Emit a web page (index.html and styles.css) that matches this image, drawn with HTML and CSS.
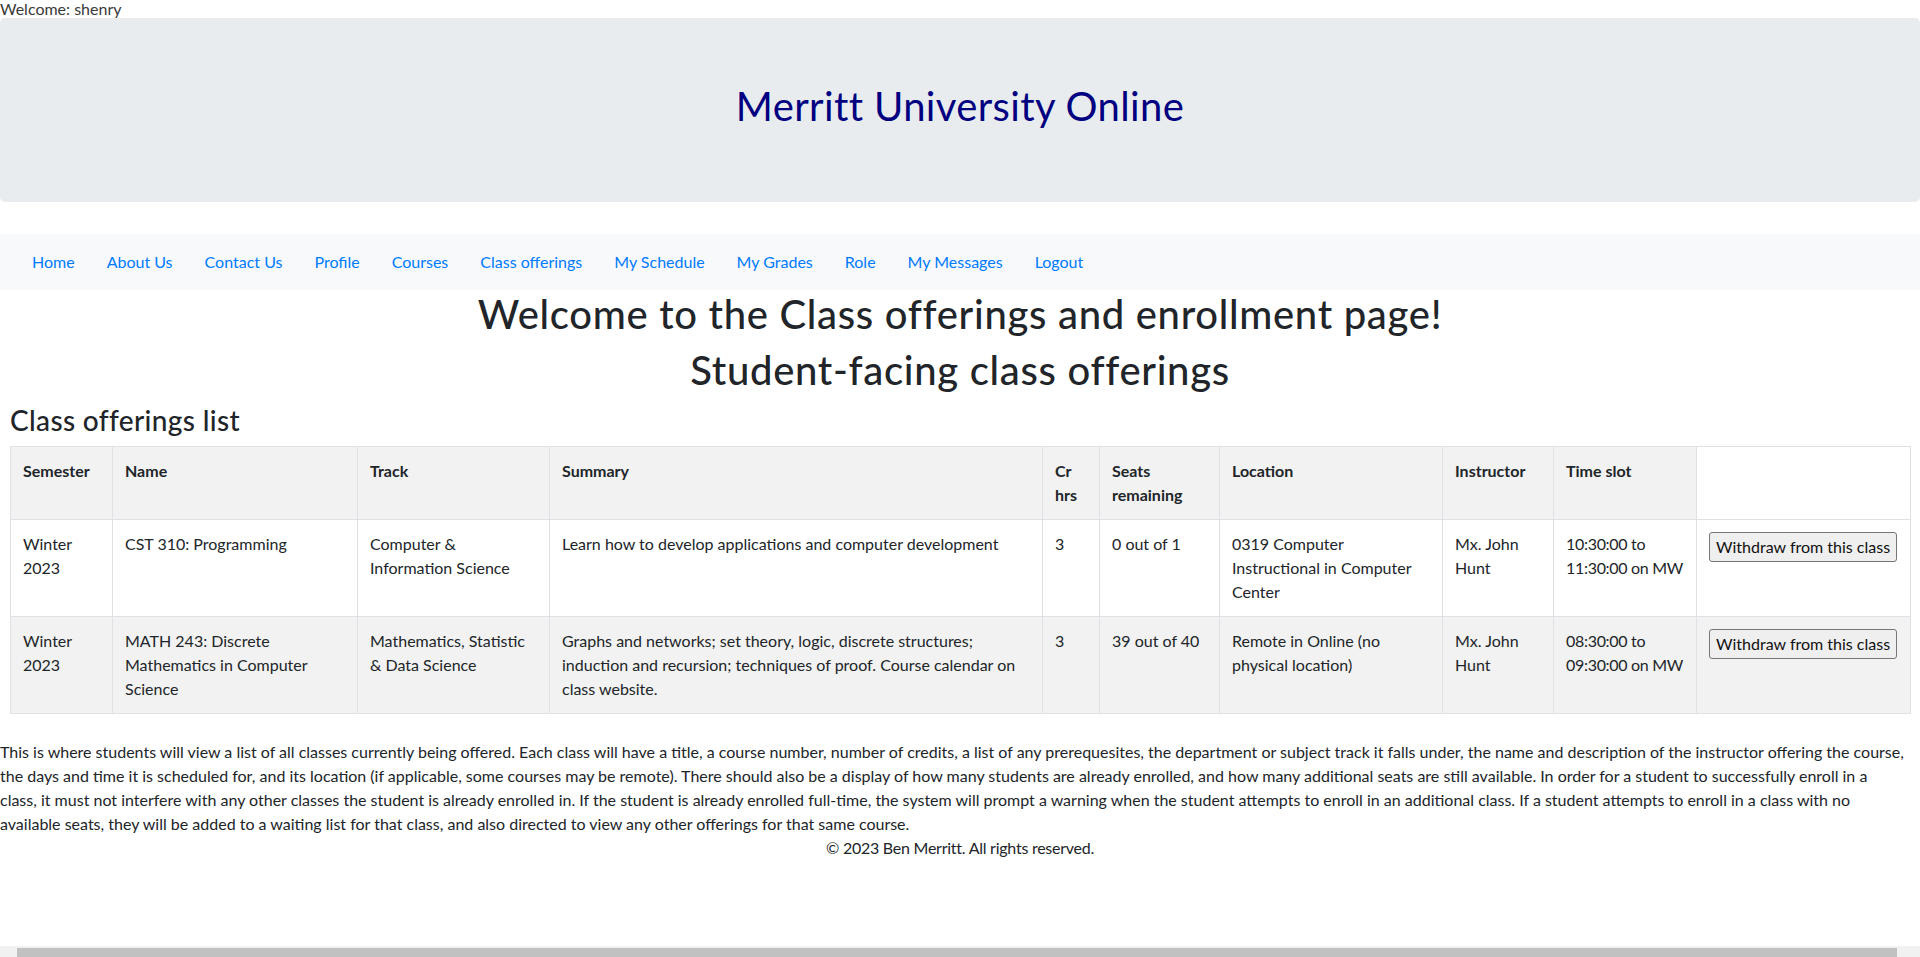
FILE: index.html
```html
<!DOCTYPE html>
<html lang="en">
<head>
<meta charset="utf-8">
<title>Class offerings - Merritt University Online</title>
<link rel="stylesheet" href="styles.css">
</head>
<body>
<div class="welcome">Welcome: shenry</div>
<header class="jumbotron">
  <h1 class="site-title">Merritt University Online</h1>
</header>
<nav class="navbar">
  <ul class="nav-list">
    <li><a class="nav-link" href="#">Home</a></li>
    <li><a class="nav-link" href="#">About Us</a></li>
    <li><a class="nav-link" href="#">Contact Us</a></li>
    <li><a class="nav-link" href="#">Profile</a></li>
    <li><a class="nav-link" href="#">Courses</a></li>
    <li><a class="nav-link" href="#">Class offerings</a></li>
    <li><a class="nav-link" href="#">My Schedule</a></li>
    <li><a class="nav-link" href="#">My Grades</a></li>
    <li><a class="nav-link" href="#">Role</a></li>
    <li><a class="nav-link" href="#">My Messages</a></li>
    <li><a class="nav-link" href="#">Logout</a></li>
  </ul>
</nav>
<main>
  <h1 class="page-title">Welcome to the Class offerings and enrollment page!</h1>
  <h1 class="page-title">Student-facing class offerings</h1>
  <section class="offerings">
    <h3 class="list-title">Class offerings list</h3>
    <table class="offer-table">
      <colgroup>
        <col class="c-sem"><col class="c-name"><col class="c-track"><col class="c-sum"><col class="c-cr">
        <col class="c-seats"><col class="c-loc"><col class="c-inst"><col class="c-time"><col class="c-act">
      </colgroup>
      <tbody>
        <tr class="head-row">
          <th>Semester</th><th>Name</th><th>Track</th><th>Summary</th><th>Cr hrs</th>
          <th>Seats remaining</th><th>Location</th><th>Instructor</th><th>Time slot</th>
        </tr>
        <tr>
          <td>Winter 2023</td>
          <td>CST 310: Programming</td>
          <td>Computer &amp; Information Science</td>
          <td>Learn how to develop applications and computer development</td>
          <td>3</td>
          <td>0 out of 1</td>
          <td>0319 Computer Instructional in Computer Center</td>
          <td>Mx. John Hunt</td>
          <td class="time">10:30:00 to 11:30:00 on MW</td>
          <td><button class="btn-withdraw" type="button">Withdraw from this class</button></td>
        </tr>
        <tr class="striped">
          <td>Winter 2023</td>
          <td>MATH 243: Discrete Mathematics in Computer Science</td>
          <td>Mathematics, Statistic &amp; Data Science</td>
          <td>Graphs and networks; set theory, logic, discrete structures; induction and recursion; techniques of proof. Course calendar on class website.</td>
          <td>3</td>
          <td>39 out of 40</td>
          <td>Remote in Online (no physical location)</td>
          <td>Mx. John Hunt</td>
          <td class="time">08:30:00 to 09:30:00 on MW</td>
          <td><button class="btn-withdraw" type="button">Withdraw from this class</button></td>
        </tr>
      </tbody>
    </table>
  </section>
  <p class="description">This is where students will view a list of all classes currently being offered. Each class will have a title, a course number, number of credits, a list of any prerequesites, the department or subject track it falls under, the name and description of the instructor offering the course,<br>the days and time it is scheduled for, and its location (if applicable, some courses may be remote). There should also be a display of how many students are already enrolled, and how many additional seats are still available. In order for a student to successfully enroll in a<br>class, it must not interfere with any other classes the student is already enrolled in. If the student is already enrolled full-time, the system will prompt a warning when the student attempts to enroll in an additional class. If a student attempts to enroll in a class with no<br>available seats, they will be added to a waiting list for that class, and also directed to view any other offerings for that same course.</p>
</main>
<footer class="footer">&copy; 2023 Ben Merritt. All rights reserved.</footer>
<div class="h-scrollbar" aria-hidden="true"><div class="h-scrollbar-thumb"></div></div>
</body>
</html>
```
FILE: styles.css
```css
html, body {
  margin: 0;
  padding: 0;
}

body {
  font-family: "Lato", "Liberation Sans", sans-serif;
  font-size: 16px;
  line-height: 1.5;
  color: #212529;
  background: #fff;
}

.welcome {
  line-height: 18px;
  color: #3a3a3a;
}

.jumbotron {
  background: #e9ecef;
  border-radius: 5px;
  padding: 64px 32px;
  margin-bottom: 32px;
}

.site-title {
  margin: 0 0 8px;
  text-align: center;
  font-size: 40px;
  font-weight: 400;
  line-height: 1.2;
  letter-spacing: 0.37px;
  color: #000080;
}

.navbar {
  background: #f8f9fa;
  padding: 8px 16px;
}

.nav-list {
  display: flex;
  list-style: none;
  margin: 0;
  padding: 0;
}

.nav-link {
  display: block;
  padding: 8px 16px;
  color: #007bff;
  text-decoration: none;
}

.page-title {
  margin: 0 0 8px;
  text-align: center;
  font-size: 40px;
  font-weight: 500;
  line-height: 1.2;
  letter-spacing: 0.7px;
}

.offerings {
  margin: 10px 10px 26px;
}

.list-title {
  margin: 0 0 8px;
  font-size: 28px;
  font-weight: 500;
  line-height: 1.2;
  letter-spacing: 0.35px;
}

.offer-table {
  width: 100%;
  table-layout: fixed;
  border-collapse: collapse;
  border: 1px solid #dee2e6;
  margin: 0;
}

.c-sem { width: 102px; }
.c-name { width: 245px; }
.c-track { width: 192px; }
.c-sum { width: 493px; }
.c-cr { width: 57px; }
.c-seats { width: 120px; }
.c-loc { width: 223px; }
.c-inst { width: 111px; }
.c-time { width: 143px; }
.c-act { width: 214px; }

.offer-table th,
.offer-table td {
  padding: 12px;
  border: 1px solid #dee2e6;
  vertical-align: top;
  text-align: left;
}

.offer-table th {
  font-weight: 700;
  background: #f2f2f2;
}

.offer-table .time {
  letter-spacing: -0.3px;
}

.striped td {
  background: #f2f2f2;
}

.btn-withdraw {
  font: inherit;
  line-height: 24px;
  color: #111;
  background: #efefef;
  border: 1px solid #767676;
  border-radius: 3px;
  padding: 2px 6px;
  margin: 0;
}

.description {
  margin: 0;
}

.footer {
  text-align: center;
  letter-spacing: -0.25px;
}

.h-scrollbar {
  position: fixed;
  left: 0;
  right: 0;
  bottom: 0;
  height: 9px;
  background: #f1f1f1;
  padding: 2px 23px 0 17px;
}

.h-scrollbar-thumb {
  height: 100%;
  background: #c1c1c1;
}
```
